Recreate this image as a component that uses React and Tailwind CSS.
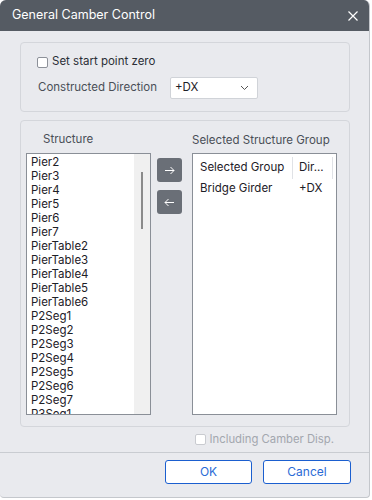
import { useState } from "react";

const structures = [
  "Pier2", "Pier3", "Pier4", "Pier5", "Pier6", "Pier7",
  "PierTable2", "PierTable3", "PierTable4", "PierTable5", "PierTable6",
  "P2Seg1", "P2Seg2", "P2Seg3", "P2Seg4", "P2Seg5", "P2Seg6", "P2Seg7", "P3Seg1",
];

function Check({ disabled }) {
  return (
    <span
      className={`inline-block w-[11px] h-[11px] rounded-[2px] border bg-white ${
        disabled ? "border-[#c9cbd0] bg-[#eceef1]" : "border-[#8d9199]"
      }`}
    />
  );
}

export default function App() {
  const [startZero] = useState(false);

  return (
    <div className="w-[372px] h-[500px] bg-white" style={{ fontFamily: "Inter, 'Noto Sans', sans-serif" }}>
      <div className="w-[370px] h-[498px] rounded-t-[6px] rounded-b-[4px] overflow-hidden flex flex-col bg-[#e9eaee] border-r border-b border-[#c4c7cc]">
        {/* title bar */}
        <div className="h-[31px] bg-[#555b63] flex items-center justify-between pl-[12px] pr-[11px] shrink-0">
          <span className="text-white text-[12.5px]">General Camber Control</span>
          <svg width="10" height="10" viewBox="0 0 10 10">
            <path d="M0.5 0.5L9.5 9.5M9.5 0.5L0.5 9.5" stroke="white" strokeWidth="1.2" />
          </svg>
        </div>

        <div className="flex-1 flex flex-col px-[20px] pt-[11px]">
          {/* option group */}
          <div className="h-[70px] w-[330px] border border-[#d4d6db] rounded-[4px] pl-[16px] pt-[12px]">
            <label className="flex items-center gap-[4px] text-[11.5px] text-[#2b2f36] h-[14px]">
              <Check disabled={startZero} />
              <span>Set start point zero</span>
            </label>
            <div className="flex items-center mt-[8px]">
              <span className="w-[133px] pl-[1px] text-[11.5px] text-[#4a4f57]">Constructed Direction</span>
              <div className="w-[88px] h-[22px] bg-white border border-[#d0d3d8] rounded-[2px] flex items-center justify-between pl-[4px] pr-[8px]">
                <span className="text-[11.5px] text-[#1d2027]">+DX</span>
                <svg width="9" height="6" viewBox="0 0 9 6">
                  <path d="M1 1L4.5 4.5L8 1" stroke="#555" strokeWidth="1" fill="none" />
                </svg>
              </div>
            </div>
          </div>

          {/* structure group */}
          <div className="mt-[8px] h-[307px] w-[330px] border border-[#d4d6db] rounded-[4px] pl-[5px] flex">
            <div className="flex flex-col">
              <div className="h-[32px] pl-[17px] pt-[13px] text-[11.5px] text-[#4a4f57] leading-none">Structure</div>
              <div className="w-[125px] h-[262px] bg-white border border-[#8a8f97] flex overflow-hidden">
                <div className="flex-1 pl-[4px] pt-[1px] text-[11.5px] text-[#1d2027] leading-[14px]">
                  {structures.map((s) => (
                    <div key={s} className="h-[14px] whitespace-nowrap">{s}</div>
                  ))}
                </div>
                <div className="w-[16px] bg-[#f0f0f0] flex justify-center pt-[18px]">
                  <div className="w-[2px] h-[57px] bg-[#8b8b8b]" />
                </div>
              </div>
            </div>

            <div className="flex flex-col gap-[8px] pt-[37px] pl-[6px]">
              <div className="w-[25px] h-[24px] rounded-[3px] bg-[#6a6f77] flex items-center justify-center">
                <svg width="11" height="9" viewBox="0 0 11 9">
                  <path d="M1 4.5H10M6.5 1L10 4.5L6.5 8" stroke="white" strokeWidth="1" fill="none" />
                </svg>
              </div>
              <div className="w-[25px] h-[24px] rounded-[3px] bg-[#6a6f77] flex items-center justify-center">
                <svg width="11" height="9" viewBox="0 0 11 9">
                  <path d="M10 4.5H1M4.5 1L1 4.5L4.5 8" stroke="white" strokeWidth="1" fill="none" />
                </svg>
              </div>
            </div>

            <div className="flex flex-col pl-[10px]">
              <div className="h-[32px] pt-[14px] text-[11.5px] text-[#4a4f57] leading-none whitespace-nowrap">Selected Structure Group</div>
              <div className="w-[145px] h-[262px] bg-white border border-[#8a8f97] pl-[7px] pt-[3px] text-[11.5px] text-[#1d2027]">
                <div className="flex h-[22px] items-center">
                  <span className="w-[93px] h-full flex items-center border-r border-[#e0e2e6]">Selected Group</span>
                  <span className="w-[40px] h-full pl-[6px] flex items-center border-r border-[#e0e2e6]">Dir...</span>
                </div>
                <div className="flex h-[20px] items-center">
                  <span className="w-[93px]">Bridge Girder</span>
                  <span className="pl-[6px]">+DX</span>
                </div>
              </div>
            </div>
          </div>

          <div className="flex justify-end pr-[15px] h-[25px] items-center">
            <label className="flex items-center gap-[4px] text-[11.3px] text-[#a3a7ae]">
              <Check disabled />
              <span>Including Camber Disp.</span>
            </label>
          </div>
        </div>

        <div className="border-t border-[#c9ccd1] h-[46px] flex justify-end items-start pt-[7px] pr-[18px] gap-[11px] shrink-0">
          <button className="w-[87px] h-[24px] bg-white border border-[#1b5fcf] rounded-[3px] text-[12px] text-[#2a6bd6]">OK</button>
          <button className="w-[88px] h-[24px] bg-white border border-[#1b5fcf] rounded-[3px] text-[12px] text-[#2a6bd6]">Cancel</button>
        </div>
      </div>
    </div>
  );
}
